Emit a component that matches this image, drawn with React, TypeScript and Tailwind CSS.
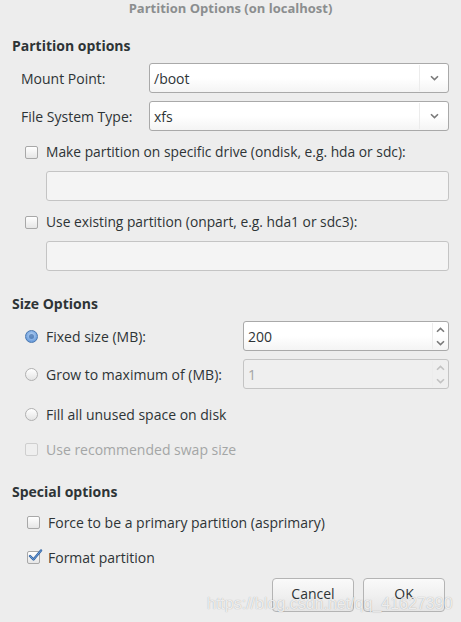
import React from "react";

const font = { fontFamily: '"Open Sans", "Noto Sans", sans-serif' };

function Chevron({ dir = "down", color = "#7a7a7a" }: { dir?: "down" | "up"; color?: string }) {
  return (
    <svg width="9" height="6" viewBox="0 0 9 6" className="block">
      {dir === "down" ? (
        <path d="M1 1.2 L4.5 4.6 L8 1.2" fill="none" stroke={color} strokeWidth="1.6" />
      ) : (
        <path d="M1 4.8 L4.5 1.4 L8 4.8" fill="none" stroke={color} strokeWidth="1.6" />
      )}
    </svg>
  );
}

function Combo({ value }: { value: string }) {
  return (
    <div className="flex h-[30px] flex-1 items-stretch rounded-[3px] border border-[#a9a9a9] bg-gradient-to-b from-white via-white to-[#f4f4f4]">
      <div className="flex flex-1 items-center pl-[4px] text-[14px] text-[#2e3436]">{value}</div>
      <div className="my-[1px] w-px bg-[#ececec]" />
      <div className="flex w-[28px] items-center justify-center">
        <Chevron />
      </div>
    </div>
  );
}

function CheckBox({ checked = false, disabled = false }: { checked?: boolean; disabled?: boolean }) {
  return (
    <div className="relative h-[13px] w-[13px] shrink-0">
      <div
        className={
          "h-[13px] w-[13px] rounded-[2px] border " +
          (disabled
            ? "border-[#cfcfcf] bg-[#efefef]"
            : "border-[#a8a8a8] bg-gradient-to-b from-white to-[#e6e6e6]")
        }
      />
      {checked && (
        <svg width="15" height="13" viewBox="0 0 15 13" className="absolute left-[1px] top-[-2px]">
          <path d="M2 7 L5.5 10.5 L13 1.5" fill="none" stroke="#3465a4" strokeWidth="2.4" strokeLinecap="round" strokeLinejoin="round" />
          <path d="M2 7 L5.5 10.5 L13 1.5" fill="none" stroke="#6a9bd8" strokeWidth="1" strokeLinecap="round" strokeLinejoin="round" />
        </svg>
      )}
    </div>
  );
}

function Radio({ checked = false }: { checked?: boolean }) {
  return checked ? (
    <div className="flex h-[13px] w-[13px] shrink-0 items-center justify-center rounded-full border border-[#4a78b0] bg-[radial-gradient(circle_at_50%_40%,#bcd6f5,#4d88d2)]">
      <div className="h-[5px] w-[5px] rounded-full bg-[#2f5f9e] opacity-60" />
    </div>
  ) : (
    <div className="h-[13px] w-[13px] shrink-0 rounded-full border border-[#b0b0b0] bg-gradient-to-b from-white to-[#e4e4e4]" />
  );
}

function Spin({ value, disabled = false }: { value: string; disabled?: boolean }) {
  return (
    <div
      className={
        "flex h-[30px] w-[206px] items-stretch rounded-[3px] border " +
        (disabled
          ? "border-[#c4c4c4] bg-[#efefef]"
          : "border-[#a9a9a9] bg-gradient-to-b from-white via-white to-[#f4f4f4]")
      }
    >
      <div className={"flex flex-1 items-center pl-[4px] text-[14px] " + (disabled ? "text-[#a4a4a4]" : "text-[#2e3436]")}>
        {value}
      </div>
      <div className="my-[1px] w-px bg-[#ececec]" />
      <div className="flex w-[15px] flex-col items-center justify-center gap-[7px]">
        <Chevron dir="up" color={disabled ? "#c2c2c2" : "#7a7a7a"} />
        <Chevron dir="down" color={disabled ? "#c2c2c2" : "#7a7a7a"} />
      </div>
    </div>
  );
}

export default function App() {
  return (
    <div className="relative h-[622px] w-[461px] overflow-hidden bg-[#ededed] text-[#2e3436]" style={font}>
      <div className="flex h-[17px] items-center justify-center text-[13px] font-bold text-[#8b8e8f]">
        Partition Options (on localhost)
      </div>

      <div className="flex flex-col pl-[12px] pr-[12px]">
        <div className="mt-[18px] flex h-[20px] items-center text-[14px] font-bold">Partition options</div>

        <div className="mt-[8px] flex items-center">
          <div className="w-[137px] pl-[9px] text-[14px]">Mount Point:</div>
          <Combo value="/boot" />
        </div>
        <div className="mt-[8px] flex items-center">
          <div className="w-[137px] pl-[9px] text-[14px]">File System Type:</div>
          <Combo value="xfs" />
        </div>

        <div className="mt-[11px] flex h-[20px] items-center gap-[8px] pl-[13px] text-[13.8px]">
          <CheckBox />
          <span>Make partition on specific drive (ondisk, e.g. hda or sdc):</span>
        </div>
        <div className="ml-[34px] mt-[9px] h-[30px] rounded-[3px] border border-[#c4c4c4] bg-[#f4f4f4]" />

        <div className="mt-[11px] flex h-[20px] items-center gap-[8px] pl-[13px] text-[13.8px]">
          <CheckBox />
          <span>Use existing partition (onpart, e.g. hda1 or sdc3):</span>
        </div>
        <div className="ml-[34px] mt-[9px] h-[30px] rounded-[3px] border border-[#c4c4c4] bg-[#f4f4f4]" />

        <div className="mt-[22px] flex h-[20px] items-center text-[14px] font-bold">Size Options</div>

        <div className="mt-[8px] flex items-center">
          <div className="flex flex-1 items-center gap-[8px] pl-[13px] text-[14px]">
            <Radio checked />
            <span>Fixed size (MB):</span>
          </div>
          <Spin value="200" />
        </div>
        <div className="mt-[8px] flex items-center">
          <div className="flex flex-1 items-center gap-[8px] pl-[13px] text-[14px]">
            <Radio />
            <span>Grow to maximum of (MB):</span>
          </div>
          <Spin value="1" disabled />
        </div>

        <div className="mt-[15px] flex h-[20px] items-center gap-[8px] pl-[13px] text-[14px]">
          <Radio />
          <span>Fill all unused space on disk</span>
        </div>
        <div className="mt-[15px] flex h-[20px] items-center gap-[8px] pl-[13px] text-[14px] text-[#a4a6a6]">
          <CheckBox disabled />
          <span>Use recommended swap size</span>
        </div>

        <div className="mt-[22px] flex h-[20px] items-center text-[14px] font-bold">Special options</div>

        <div className="mt-[11px] flex h-[20px] items-center gap-[8px] pl-[15px] text-[14px]">
          <CheckBox />
          <span>Force to be a primary partition (asprimary)</span>
        </div>
        <div className="mt-[15px] flex h-[20px] items-center gap-[8px] pl-[15px] text-[14px]">
          <CheckBox checked />
          <span>Format partition</span>
        </div>

        <div className="mt-[11px] flex justify-end gap-[9px] pr-[4px]">
          <button className="h-[34px] w-[82px] rounded-[4px] border border-[#b4b4b4] bg-gradient-to-b from-[#fafafa] to-[#e6e6e6] pb-[4px] text-[14px] text-[#2e3436]">
            Cancel
          </button>
          <button className="h-[34px] w-[82px] rounded-[4px] border border-[#b4b4b4] bg-gradient-to-b from-[#fafafa] to-[#e6e6e6] pb-[4px] text-[14px] text-[#2e3436]">
            OK
          </button>
        </div>
      </div>

      <div
        className="absolute left-[207px] top-[596px] whitespace-nowrap text-[16px] leading-[16px] text-white/80 [text-shadow:0_0_1px_rgba(0,0,0,0.35)]"
        style={{ fontFamily: '"Liberation Sans", Arial, sans-serif' }}
      >
        https://blog.csdn.net/qq_41627390
      </div>
    </div>
  );
}
